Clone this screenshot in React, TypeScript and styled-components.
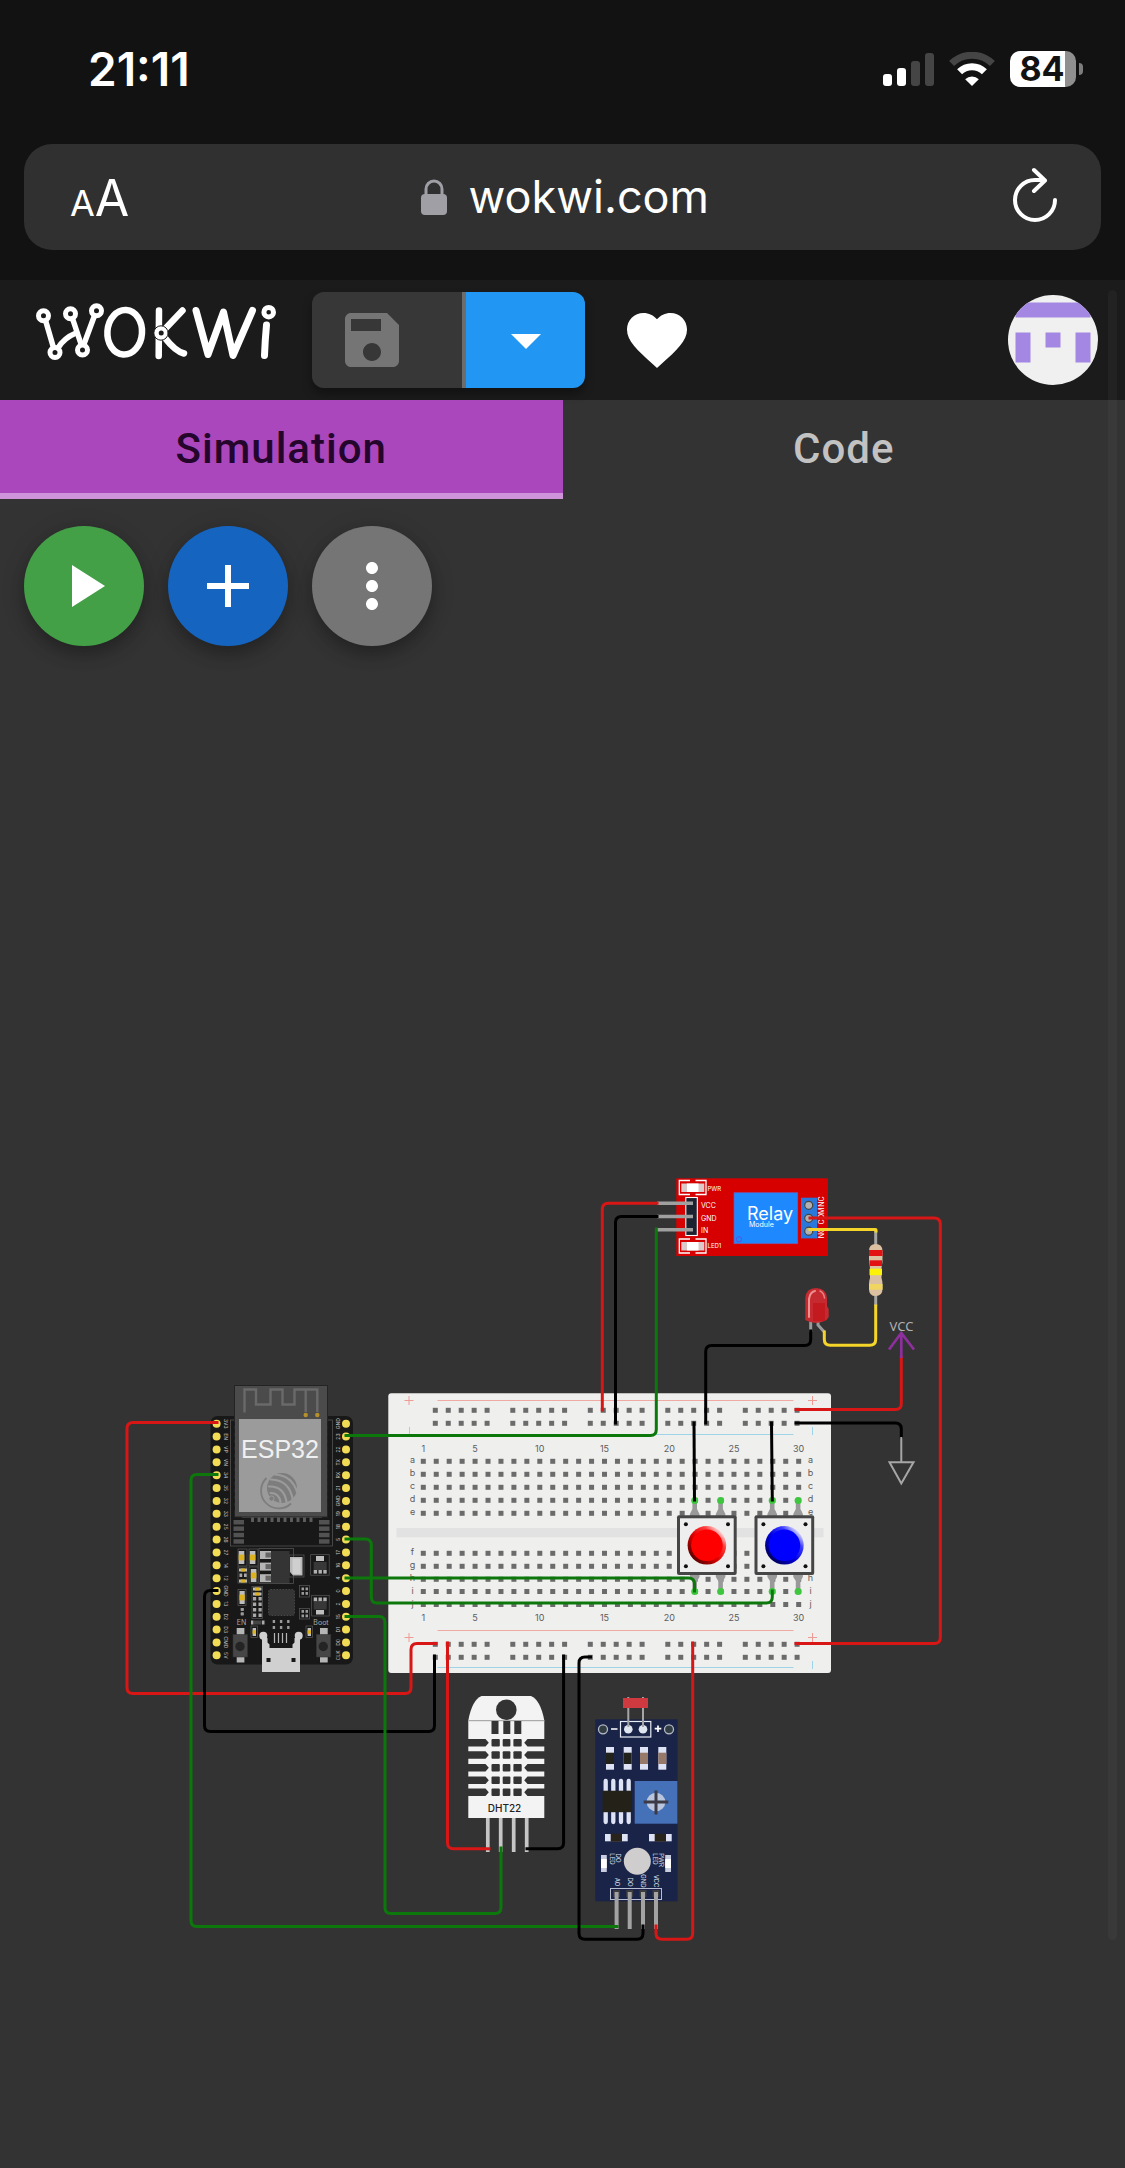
import React from "react";
import styled, { createGlobalStyle } from "styled-components";

const GlobalStyle = createGlobalStyle`
  * { box-sizing: border-box; }
  body {
    margin: 0;
    background: #333333;
    font-family: Inter, "Liberation Sans", sans-serif;
  }
  button, input { font: inherit; color: inherit; border: 0; padding: 0; margin: 0; background: none; }
  button { cursor: pointer; }
  svg { display: block; flex: none; }
`;

const Page = styled.div`
  position: relative;
  min-height: 100vh;
  display: flex;
  flex-direction: column;
  background: #333333;
`;

const BrowserChrome = styled.header`
  background: #121212;
  color: #ffffff;
  padding: 0 24px 30px;
`;

const StatusBar = styled.div`
  height: 144px;
  padding: 0 18px 6px 64px;
  display: flex;
  align-items: center;
  justify-content: space-between;
`;

const Clock = styled.time`
  font-size: 46px;
  font-weight: 600;
  line-height: 48px;
`;

const StatusIcons = styled.div`
  display: flex;
  align-items: center;
  gap: 15px;
`;

const Battery = styled.div`
  display: flex;
  align-items: center;
  gap: 3px;
`;

const BatteryLevel = styled.div`
  width: 66px;
  height: 36px;
  padding-right: 2px;
  border-radius: 10px;
  background: linear-gradient(to right, #ffffff 55px, #8f8f8f 55px);
  color: #121212;
  font-size: 34px;
  font-weight: 700;
  line-height: 36px;
  text-align: center;
`;

const BatteryNub = styled.div`
  width: 4px;
  height: 12px;
  border-radius: 0 6px 6px 0;
  background: #7d7d7d;
`;

const AddressBar = styled.div`
  height: 106px;
  padding: 0 36px 0 46px;
  border-radius: 28px;
  background: #303030;
  display: grid;
  grid-template-columns: 1fr auto 1fr;
  align-items: center;
`;

const TextSizeButton = styled.button`
  justify-self: start;
  display: flex;
  align-items: baseline;
  padding-top: 6px;
  line-height: 60px;
`;

const Glyph = styled.span<{ $size: number }>`
  font-size: ${(p) => p.$size}px;
`;

const Address = styled.label`
  display: flex;
  align-items: center;
  gap: 22px;
`;

const AddressInput = styled.input`
  width: 246px;
  font-size: 45px;
  line-height: 56px;
  outline: none;
`;

const IconButton = styled.button`
  display: flex;
  align-items: center;
  justify-content: center;
`;

const ReloadButton = styled(IconButton)`
  justify-self: end;
`;

const AppBar = styled.nav`
  height: 120px;
  padding: 0 27px 0 36px;
  background: #1b1b1b;
  color: #ffffff;
  display: flex;
  align-items: center;
`;

const LogoLink = styled.a`
  margin-right: 36px;
  padding-bottom: 17px;
`;

const SplitButton = styled.div`
  display: flex;
  height: 96px;
  margin-right: 36px;
  border-radius: 12px;
  overflow: hidden;
  box-shadow: 0 6px 10px rgba(0, 0, 0, 0.35);
`;

const SaveButton = styled(IconButton)`
  width: 154px;
  padding-left: 24px;
  justify-content: flex-start;
  background: #373737;
  color: #757575;
  border-right: 4px solid #6c6c6c;
`;

const SaveMenuButton = styled(IconButton)`
  width: 119px;
  background: #2196f3;
  color: #ffffff;
`;

const AvatarButton = styled.button`
  margin-left: auto;
  width: 90px;
  height: 90px;
  border-radius: 50%;
  overflow: hidden;
`;

const Tabs = styled.div`
  display: grid;
  grid-template-columns: 1fr 1fr;
`;

const Tab = styled.button<{ $active?: boolean }>`
  height: 99px;
  padding-top: 4px;
  border-bottom: 6px solid ${(p) => (p.$active ? "#ce93d8" : "transparent")};
  background: ${(p) => (p.$active ? "#ab47bc" : "transparent")};
  color: ${(p) => (p.$active ? "#24052b" : "#c2c2c2")};
  font-family: Roboto, "Liberation Sans", sans-serif;
  font-size: 42px;
  font-weight: 500;
  letter-spacing: 1px;
`;

const Workspace = styled.main`
  flex: 1;
  display: flex;
  flex-direction: column;
  padding: 27px 0 208px;
`;

const Controls = styled.div`
  display: flex;
  gap: 24px;
  padding: 0 24px;
`;

const Fab = styled(IconButton)<{ $color: string }>`
  width: 120px;
  height: 120px;
  border-radius: 50%;
  background: ${(p) => p.$color};
  color: #ffffff;
  box-shadow: 0 9px 15px rgba(0, 0, 0, 0.2), 0 4px 24px rgba(0, 0, 0, 0.16);
`;

const Diagram = styled.svg`
  width: 100%;
  height: auto;
  margin-top: auto;
`;

const ScrollThumb = styled.div`
  position: absolute;
  top: 290px;
  right: 8px;
  bottom: 228px;
  width: 9px;
  border-radius: 5px;
  background: rgba(255, 255, 255, 0.03);
`;

const MaterialIcon = ({ d }: { d: string }) => (
  <svg width="72" height="72" viewBox="0 0 24 24" fill="currentColor" aria-hidden="true">
    <path d={d} />
  </svg>
);

const icons = {
  save: "M17 3H5c-1.11 0-2 .9-2 2v14c0 1.1.89 2 2 2h14c1.1 0 2-.9 2-2V7l-4-4zm-5 16c-1.66 0-3-1.34-3-3s1.34-3 3-3 3 1.34 3 3-1.34 3-3 3zm3-10H5V5h10v4z",
  drop: "m7 10 5 5 5-5z",
  heart:
    "m12 21.35-1.45-1.32C5.4 15.36 2 12.28 2 8.5 2 5.42 4.42 3 7.5 3c1.74 0 3.41.81 4.5 2.09C13.09 3.81 14.76 3 16.5 3 19.58 3 22 5.42 22 8.5c0 3.78-3.4 6.86-8.55 11.54L12 21.35z",
  play: "M8 5v14l11-7z",
  add: "M19 13h-6v6h-2v-6H5v-2h6V5h2v6h6v2z",
  more: "M12 8c1.1 0 2-.9 2-2s-.9-2-2-2-2 .9-2 2 .9 2 2 2zm0 2c-1.1 0-2 .9-2 2s.9 2 2 2 2-.9 2-2-.9-2-2-2zm0 6c-1.1 0-2 .9-2 2s.9 2 2 2 2-.9 2-2-.9-2-2-2z",
};

const SignalIcon = () => (
  <svg width="51" height="33" viewBox="0 0 51 33" aria-label="Signal" role="img">
    <rect x="0" y="21" width="9" height="12" rx="3" fill="#fff" />
    <rect x="14" y="15" width="9" height="18" rx="3" fill="#fff" />
    <rect x="28" y="8" width="9" height="25" rx="3" fill="#454545" />
    <rect x="42" y="0" width="9" height="33" rx="3" fill="#454545" />
  </svg>
);

const WifiIcon = () => (
  <svg width="46" height="34" viewBox="0 0 46 34" aria-label="Wi-Fi" role="img">
    <path d="M2.6 11.6A29 29 0 0 1 43.4 11.6" fill="none" stroke="#454545" strokeWidth="7" />
    <path d="M10.6 19.8A17.5 17.5 0 0 1 35.4 19.8" fill="none" stroke="#fff" strokeWidth="7" />
    <path d="M23 34 16.2 27.2A9.6 9.6 0 0 1 29.8 27.2Z" fill="#fff" />
  </svg>
);

const LockIcon = () => (
  <svg width="26" height="36" viewBox="0 0 26 36" aria-hidden="true">
    <path d="M5 17V10a8 8 0 0 1 16 0v7" fill="none" stroke="#9f9fa5" strokeWidth="3" />
    <rect x="0" y="15" width="26" height="21" rx="4" fill="#9f9fa5" />
  </svg>
);

const ReloadIcon = () => (
  <svg width="60" height="60" viewBox="0 0 60 60" fill="none" stroke="#fff" strokeWidth="4" strokeLinecap="round" strokeLinejoin="round" aria-hidden="true">
    <path d="M50 33a20 20 0 1 1-20-20h9M29 3l11 10.500L29 24" />
  </svg>
);

const Logo = () => (
  <svg width="240" height="58" viewBox="36 302 240 58" fill="none" stroke="#fff" strokeLinecap="round" strokeLinejoin="round" role="img" aria-label="Wokwi">
    <g strokeWidth="5.500">
      <line x1="46" y1="321" x2="53" y2="345" />
      <path d="M58 347Q64 337 76 332" />
      <line x1="73" y1="319" x2="81" y2="343" />
      <line x1="94" y1="316" x2="84" y2="343" />
    </g>
    <g strokeWidth="5">
      <circle cx="43.500" cy="314.700" r="5" />
      <circle cx="70.500" cy="312.700" r="5" />
      <circle cx="96.500" cy="309.700" r="5" />
      <circle cx="55" cy="351.500" r="5" />
      <circle cx="82.500" cy="349" r="5" />
      <circle cx="268.700" cy="311.200" r="4.800" />
    </g>
    <g strokeWidth="6.500">
      <ellipse cx="124.700" cy="331.300" rx="17.300" ry="22.300" transform="rotate(4 124.700 331.300)" />
      <line x1="159" y1="309.500" x2="158.700" y2="355" />
      <line x1="182.500" y1="309.500" x2="165" y2="328" />
      <path d="M165 337Q175 350 184 352.500" />
      <polyline strokeWidth="7" points="196,309.500 208,353.500 223.500,311 233,354.500 252.500,309.500" />
      <path strokeWidth="7" d="M266.500 324Q265 340 264.500 354.500" />
    </g>
    <circle cx="161" cy="332" r="7.200" stroke="#1b1b1b" strokeWidth="1" fill="#fff" />
    <circle cx="161.200" cy="332" r="2.500" fill="#1b1b1b" stroke="none" />
  </svg>
);

const AvatarPicture = () => (
  <svg width="90" height="90" viewBox="0 0 90 90" aria-hidden="true">
    <rect width="90" height="90" fill="#f0f0f0" />
    <g fill="#a387e2">
      <rect x="7.500" y="7.500" width="75" height="15" />
      <rect x="7.500" y="37.500" width="15" height="30" />
      <rect x="67.500" y="37.500" width="15" height="30" />
      <rect x="37.500" y="37.500" width="15" height="15" />
    </g>
  </svg>
);

/* ---------- circuit ---------- */

type Point = [number, number];

const RED = "#d81616";
const GREEN = "#0c780c";
const BLACK = "#000000";
const GOLD = "#f5d52a";

/* Joins the points with straight runs and rounds every bend. */
function routeWire(points: Point[], radius = 6) {
  let d = `M${points[0][0]} ${points[0][1]}`;
  for (let i = 1; i < points.length - 1; i++) {
    const [px, py] = points[i - 1];
    const [x, y] = points[i];
    const [nx, ny] = points[i + 1];
    const a = Math.hypot(x - px, y - py);
    const b = Math.hypot(nx - x, ny - y);
    d += `L${x - ((x - px) / a) * radius} ${y - ((y - py) / a) * radius}`;
    d += `Q${x} ${y} ${x + ((nx - x) / b) * radius} ${y + ((ny - y) / b) * radius}`;
  }
  const end = points[points.length - 1];
  return `${d}L${end[0]} ${end[1]}`;
}

const wires: { color: string; radius?: number; points: Point[] }[] = [
  { color: RED, points: [[217, 1422.5], [127, 1422.5], [127, 1693.5], [411, 1693.5], [411, 1643.5], [436, 1643.5]] },
  { color: GREEN, points: [[217, 1474.5], [191, 1474.5], [191, 1926.5], [617, 1926.5]] },
  { color: BLACK, points: [[217, 1590.5], [204.5, 1590.5], [204.5, 1731.5], [434.5, 1731.5], [434.5, 1656]] },
  { color: GREEN, points: [[346, 1435.5], [656.3, 1435.5], [656.3, 1229]] },
  { color: GREEN, points: [[346, 1539], [371.3, 1539], [371.3, 1603], [772.3, 1603], [772.3, 1591]] },
  { color: GREEN, points: [[346, 1578], [694.5, 1578], [694.5, 1591]] },
  { color: GREEN, points: [[346, 1616.5], [385, 1616.5], [385, 1913.5], [501, 1913.5], [501, 1848]] },
  { color: RED, points: [[657, 1203.3], [602.3, 1203.3], [602.3, 1410]] },
  { color: BLACK, points: [[657, 1216.5], [615.5, 1216.5], [615.5, 1423]] },
  { color: RED, points: [[810, 1218], [940.3, 1218], [940.3, 1643.5], [796, 1643.5]] },
  { color: GOLD, radius: 0.5, points: [[810, 1229.5], [876, 1229.5], [876, 1231]] },
  { color: GOLD, points: [[824.3, 1332], [824.3, 1345.3], [875.7, 1345.3], [875.7, 1306]] },
  { color: BLACK, points: [[810.7, 1331], [810.7, 1345.5], [705.7, 1345.5], [705.7, 1423]] },
  { color: RED, points: [[901.3, 1357], [901.3, 1409.5], [796, 1409.5]] },
  { color: BLACK, points: [[796, 1423], [901.3, 1423], [901.3, 1437]] },
  { color: BLACK, points: [[694, 1423], [694.5, 1500]] },
  { color: BLACK, points: [[771.5, 1423], [772.3, 1500]] },
  { color: RED, points: [[447.5, 1643], [447.5, 1848.7], [489, 1848.7]] },
  { color: BLACK, points: [[563.6, 1656], [563.6, 1848.7], [527, 1848.7]] },
  { color: BLACK, points: [[590.5, 1657], [579, 1657], [579, 1939.3], [643, 1939.3], [643, 1926]] },
  { color: RED, points: [[692.7, 1643], [692.7, 1939.3], [656, 1939.3], [656, 1926]] },
];

const Wires = () => (
  <g fill="none" strokeWidth="3" strokeLinecap="square">
    {wires.map((w, i) => (
      <path key={i} d={routeWire(w.points, w.radius)} stroke={w.color} />
    ))}
  </g>
);

const leftPins = ["3V3", "EN", "VP", "VN", "34", "35", "32", "33", "25", "26", "27", "14", "12", "GND", "13", "D2", "D3", "CMD", "5V"];
const rightPins = ["GND", "23", "22", "TX", "RX", "21", "GND", "19", "18", "5", "17", "16", "4", "0", "2", "15", "D1", "D0", "CLK"];
const pinY = (i: number) => 1423.7 + i * 12.87;
const times = (n: number) => Array.from({ length: n }, (_, i) => i);

/* A ceramic capacitor: grey caps at the ends, amber body between. */
const Capacitor = ({ x, y, w, h }: { x: number; y: number; w: number; h: number }) => {
  const upright = h > w;
  return (
    <g>
      <rect x={x} y={y} width={w} height={h} fill="#bdbdbd" />
      {upright ? (
        <rect x={x} y={y + h * 0.28} width={w} height={h * 0.44} fill="#dcb21e" />
      ) : (
        <rect x={x + w * 0.22} y={y} width={w * 0.56} height={h} fill="#dcb21e" />
      )}
    </g>
  );
};

const EspBoard = () => (
  <g>
    <rect x="210.500" y="1416" width="142.500" height="248.500" rx="7" fill="#181818" />
    {times(19).map((i) => (
      <g key={i}>
        <circle cx="216.600" cy={pinY(i)} r="4" fill="#f3dc55" />
        <circle cx="346" cy={pinY(i)} r="4" fill="#f3dc55" />
        <text fontSize="5" fill="#c9c9c9" textAnchor="middle" transform={`translate(224 ${pinY(i)}) rotate(90)`}>{leftPins[i]}</text>
        <text fontSize="5" fill="#c9c9c9" textAnchor="middle" transform={`translate(339.500 ${pinY(i)}) rotate(-90)`}>{rightPins[i]}</text>
      </g>
    ))}
    <rect x="230.500" y="1420" width="102" height="126" fill="none" stroke="#5a5a5a" strokeWidth="0.700" />
    <rect x="234.500" y="1385.500" width="93" height="131.500" fill="#4b4b4b" stroke="#242424" />
    <g stroke="#181818" strokeWidth="1.600" strokeDasharray="4 3">
      <line x1="234" y1="1422" x2="234" y2="1512" />
      <line x1="328.500" y1="1422" x2="328.500" y2="1512" />
    </g>
    <path d="M244.500 1412.500V1389.500H256V1404.500H270.500V1389.500H282.500V1404.500H294.500V1389.500H317.300V1412M305.700 1389.500V1412" fill="none" stroke="#6a6a6a" strokeWidth="2.400" />
    <circle cx="305.700" cy="1415" r="2.200" fill="#b4912c" />
    <circle cx="317.300" cy="1415" r="2.200" fill="#b4912c" />
    <rect x="239" y="1419" width="82" height="93" fill="#9b9b9b" />
    <text x="280" y="1457.500" fontSize="25" fontFamily="Liberation Sans, sans-serif" fill="#f0f0f0" textAnchor="middle">ESP32</text>
    <g>
      <circle cx="282" cy="1488" r="15" fill="#7d7d7d" />
      <path d="M266.500 1478A17 17 0 1 0 291 1503.500" fill="none" stroke="#7d7d7d" strokeWidth="1.800" />
      <g fill="none" stroke="#9b9b9b" strokeWidth="2.200" strokeLinecap="round">
        <path d="M271 1479.500Q290 1480 293 1501" />
        <path d="M269 1486.500Q284 1486 286.500 1502" />
        <path d="M270.500 1493Q279 1493 280.500 1502" />
        <path d="M275 1474.500Q292 1475.500 297 1492" />
      </g>
      <circle cx="271.500" cy="1498.500" r="2.600" fill="#7d7d7d" stroke="#9b9b9b" />
    </g>
    <rect x="242" y="1517" width="80" height="1" fill="#3a3a3a" />
    {times(10).map((i) => (
      <rect key={i} x={251 + i * 6.5} y="1517.500" width="3" height="4.500" fill="#5b5b5b" />
    ))}
    {times(4).map((i) => (
      <g key={i} fill="#525252">
        <rect x="233.500" y={1520 + i * 6.4} width="10.500" height="4.500" />
        <rect x="319" y={1520 + i * 6.4} width="10.500" height="4.500" />
      </g>
    ))}
    <g fill="none" stroke="#5a5a5a" strokeWidth="0.700">
      <rect x="238" y="1549" width="9" height="17" />
      <rect x="249" y="1549" width="9" height="17" />
      <rect x="238" y="1567" width="9" height="16" />
      <rect x="249" y="1567" width="9" height="16" />
      <rect x="259" y="1548.500" width="34.500" height="35" />
      <rect x="289" y="1555" width="15" height="22" />
      <rect x="310.700" y="1554.700" width="18.500" height="20.500" />
      <rect x="311.700" y="1595.300" width="17.500" height="20.700" />
      <rect x="299.500" y="1585.500" width="10" height="11.500" />
      <rect x="299.500" y="1608.500" width="10" height="10.500" />
      <rect x="238" y="1589.500" width="8" height="16" />
      <rect x="252" y="1586.500" width="10.500" height="32" />
      <rect x="251" y="1626" width="6.500" height="11.500" />
      <rect x="306" y="1626" width="6.500" height="11.500" />
    </g>
    <Capacitor x={238.7} y={1551} w={5.6} h={13} />
    <Capacitor x={249.8} y={1551} w={5.6} h={13} />
    <Capacitor x={239} y={1568.5} w={8} h={3} />
    <rect x="239.500" y="1573.500" width="2.700" height="3.500" fill="#aaa" />
    <rect x="244" y="1573.500" width="2.700" height="3.500" fill="#aaa" />
    <Capacitor x={239} y={1579.5} w={8} h={3} />
    <Capacitor x={250.8} y={1569} w={5.6} h={13} />
    <Capacitor x={239.5} y={1591} w={5.2} h={13} />
    <Capacitor x={253} y={1587.5} w={8.5} h={3} />
    <Capacitor x={253} y={1592.5} w={8.5} h={3} />
    {times(4).map((i) => (
      <g key={i} fill="#a8a8a8">
        <rect x="253" y={1597 + i * 5.5} width="3.200" height="3.500" />
        <rect x="258.500" y={1597 + i * 5.5} width="3.200" height="3.500" />
      </g>
    ))}
    <rect x="271" y="1551" width="18.500" height="32" fill="#343434" />
    {times(3).map((i) => (
      <g key={i}>
        <rect x="260" y={1551 + i * 11.6} width="11" height="8" fill="#b5b5b5" />
        <rect x="265.500" y={1552.5 + i * 11.6} width="5.500" height="5" fill="#666" />
      </g>
    ))}
    <path d="M290 1557H302.500V1575.500H293L290 1572Z" fill="#b9b9b9" />
    <rect x="292.500" y="1558.500" width="8" height="15.500" fill="#cfcfcf" />
    <rect x="313.700" y="1562" width="13" height="8" fill="#383838" />
    <rect x="316" y="1556" width="8" height="5" fill="#bdbdbd" />
    <rect x="313.700" y="1600.500" width="13" height="9" fill="#383838" />
    <rect x="316" y="1610" width="8" height="4.500" fill="#bdbdbd" />
    {times(3).map((i) => (
      <g key={i} fill="#b0b0b0">
        <rect x={313.7 + i * 4.8} y="1570" width="3.400" height="3.600" />
        <rect x={313.7 + i * 4.8} y="1597.500" width="3.400" height="3.600" />
        <rect x={272.7 + i * 7.2} y="1620" width="2.400" height="3" fill="#9a9a9a" />
        <rect x={272.7 + i * 7.2} y="1626" width="2.400" height="3" fill="#9a9a9a" />
      </g>
    ))}
    {times(2).map((i) =>
      times(2).map((j) => (
        <g key={`${i}${j}`} fill="#999">
          <rect x={301.5 + i * 4} y={1587.5 + j * 4.5} width="2.500" height="2.800" />
          <rect x={301.5 + i * 4} y={1610 + j * 4.5} width="2.500" height="2.800" />
          <rect x={240.8} y={1608 + j * 4.5} width="2.800" height="2.800" />
        </g>
      ))
    )}
    <rect x="268.500" y="1589.500" width="26" height="26" rx="2" fill="#353535" stroke="#474747" strokeDasharray="1.500 1.500" />
    <g fontSize="7" fill="#a8a8a8" textAnchor="middle">
      <text x="241.500" y="1624.500">EN</text>
      <text x="321" y="1624.500">Boot</text>
    </g>
    <rect x="251" y="1620.500" width="2.500" height="4" fill="#aaa" />
    <rect x="253.500" y="1620.500" width="8" height="4" fill="#444" />
    <rect x="262" y="1620.500" width="2.500" height="4" fill="#aaa" />
    <Capacitor x={252.6} y={1628} w={3.4} h={8} />
    <Capacitor x={307.6} y={1628} w={3.4} h={8} />
    {[233, 316.3].map((x) => (
      <g key={x}>
        <rect x={x + 3.7} y="1628" width="7.700" height="34.500" fill="#b5b5b5" />
        <rect x={x} y="1634.500" width="14.500" height="22.500" fill="#464646" stroke="#333" strokeWidth="0.600" />
        <circle cx={x + 7} cy="1646.500" r="4.700" fill="#242424" />
      </g>
    ))}
    <circle cx="263.300" cy="1635.700" r="4" fill="#d0d0d0" />
    <circle cx="298.700" cy="1635.700" r="4" fill="#d0d0d0" />
    <path d="M262 1638H267.500V1642.500L269.500 1644.500V1648H292.500V1644.500L294.500 1642.500V1638H300V1672H262Z" fill="#d0d0d0" />
    <path d="M274.500 1633V1643M278.500 1633V1643M282.500 1633V1643M286.500 1633V1643" stroke="#b5b5b5" strokeWidth="1.200" />
    <rect x="266.500" y="1658" width="4" height="4" fill="#181818" />
    <rect x="291.500" y="1658" width="4" height="4" fill="#181818" />
  </g>
);

const rowLabels = ["a", "b", "c", "d", "e", "f", "g", "h", "i", "j"];
const rowY = [1461.3, 1474.3, 1487.3, 1500.3, 1513.3, 1553.3, 1566.3, 1579.3, 1591.5, 1604.5];
const columnX = (n: number) => 423.3 + (n - 1) * 12.944;
const railY = [1410.3, 1423.3, 1644.3, 1657.3];

const Breadboard = () => (
  <g>
    <rect x="388.300" y="1393.300" width="442.700" height="279.700" rx="3" fill="#efefee" />
    <rect x="396.500" y="1528" width="427" height="9.300" fill="#e2e2e2" />
    <g stroke="#f0aaa4">
      <line x1="437.500" y1="1400.500" x2="793.500" y2="1400.500" />
      <line x1="437.500" y1="1630.500" x2="793.500" y2="1630.500" />
    </g>
    <g stroke="#9fd4e8">
      <line x1="437.500" y1="1434.500" x2="793.500" y2="1434.500" />
      <line x1="437.500" y1="1667.500" x2="793.500" y2="1667.500" />
      <path d="M409.500 1427V1435M812.500 1427V1435M812.500 1661V1669" />
    </g>
    <path
      d="M404.500 1400.500H413.500M409 1396V1405M808 1400.500H817M812.500 1396V1405M404.500 1637.500H413.500M409 1633V1642M808 1637.500H817M812.500 1633V1642"
      stroke="#ef9a94"
      fill="none"
    />
    <g fill="#6b6b6b">
      {railY.map((y) =>
        times(25).map((i) => (
          <rect key={`${y}-${i}`} x={432.8 + Math.floor(i / 5) * 77.5 + (i % 5) * 12.95} y={y - 2.5} width="5" height="5" />
        ))
      )}
      {rowY.map((y) =>
        times(30).map((i) => <rect key={`${y}-${i}`} x={columnX(i + 1) - 2.5} y={y - 2.5} width="5" height="5" />)
      )}
    </g>
    <g fontSize="9" fill="#5c5c5c" textAnchor="middle">
      {[1, 5, 10, 15, 20, 25, 30].map((n) => (
        <g key={n}>
          <text x={columnX(n)} y="1452">{n}</text>
          <text x={columnX(n)} y="1621">{n}</text>
        </g>
      ))}
      {rowLabels.map((label, i) => (
        <g key={label}>
          <text x="412.500" y={rowY[i] + 2}>{label}</text>
          <text x="810.500" y={rowY[i] + 2}>{label}</text>
        </g>
      ))}
    </g>
  </g>
);

const PushButton = ({ x, color }: { x: number; color: "red" | "blue" }) => (
  <g>
    {[694.7, 720.6].map((legX) => (
      <g key={legX} transform={`translate(${x - 677} 0)`}>
        <path d={`M${legX - 2.3} 1500h4.600v9l2.500 5v3h-9.600v-3l2.500 -5z`} fill="#999" />
        <path d={`M${legX - 2.3} 1592h4.600v-11l2.500 -4v-3h-9.600v3l2.500 4z`} fill="#999" />
        <circle cx={legX} cy="1500.500" r="3.500" fill="#3fc63f" />
        <circle cx={legX} cy="1591.500" r="3.500" fill="#3fc63f" />
      </g>
    ))}
    <rect x={x} y="1515.300" width="59.700" height="59.700" rx="2" fill="#464646" />
    <rect x={x + 3} y="1518.300" width="53.700" height="53.700" fill="#eeeeee" />
    {[8.9, 51].map((dx) => [1524.3, 1566.3].map((y) => <circle key={`${dx}-${y}`} cx={x + dx} cy={y} r="2" fill="#111" />))}
    <circle cx={x + 29.9} cy="1545.300" r="19.300" fill={`url(#${color}Rim)`} />
    <circle cx={x + 29.9} cy="1545.300" r="15.800" fill={color} />
  </g>
);

const LedPackage = ({ y }: { y: number }) => (
  <g>
    <path
      d={`M690 ${y}H679.300V${y + 14}H690M695.500 ${y}H706V${y + 14}H695.500`}
      fill="none"
      stroke="#ffffff"
      strokeWidth="1.300"
    />
    <rect x="681.300" y={y + 3} width="23" height="8.500" fill="#dccaca" />
    <rect x="687" y={y + 3} width="11.500" height="8.500" fill="#fff" />
  </g>
);

const Relay = () => (
  <g>
    <rect x="676.300" y="1178.300" width="151.700" height="77.700" fill="#d60000" />
    <LedPackage y={1180.5} />
    <LedPackage y={1239} />
    <rect x="685.800" y="1197.500" width="11.500" height="38" fill="#1d2230" stroke="#fff" strokeWidth="1.100" />
    <path d="M657 1203.300H693M657 1216.500H693M657 1229.700H693" stroke="#a0a0a0" strokeWidth="3.400" />
    <g fontSize="7" fill="#fff">
      <text x="701" y="1207.500">VCC</text>
      <text x="701" y="1220.500">GND</text>
      <text x="701" y="1232.500">IN</text>
      <text x="707.500" y="1191" fontSize="6">PWR</text>
      <text x="707.500" y="1248" fontSize="6">LED1</text>
    </g>
    <rect x="734" y="1192.700" width="63.700" height="51" fill="#1e88ff" stroke="#7a58a8" strokeWidth="0.700" />
    <circle cx="739" cy="1239.300" r="2.600" fill="none" stroke="#5656d8" />
    <text x="747" y="1220.300" fontSize="18" fill="#fff">Relay</text>
    <text x="749" y="1227.300" fontSize="7" fill="#fff">Module</text>
    <rect x="801" y="1197.700" width="16" height="40.700" fill="#2a78dc" />
    {[1205.3, 1218.3, 1231.2].map((y) => (
      <circle key={y} cx="808.700" cy={y} r="4" fill="#b0b0b0" stroke="#444" strokeWidth="1.200" />
    ))}
    <g fontSize="7" fill="#fff" textAnchor="middle">
      <text transform="translate(824 1233) rotate(-90)">NO</text>
      <text transform="translate(824 1216) rotate(-90)">COM</text>
      <text transform="translate(824 1201.500) rotate(-90)">NC</text>
    </g>
  </g>
);

const Resistor = () => (
  <g>
    <line x1="875.700" y1="1231" x2="875.700" y2="1306" stroke="#a5a5a5" strokeWidth="3" />
    <path
      d="M869 1251Q869 1244 875.700 1244T882.500 1251V1262Q882 1265 881.500 1268V1278Q882.500 1281 882.500 1284V1289Q882.500 1296 875.700 1296T869 1289V1284Q869 1281 870 1278V1268Q869.500 1265 869 1262Z"
      fill="#dcc0a2"
    />
    <rect x="869" y="1250" width="13.500" height="6" fill="#e31212" />
    <rect x="869.500" y="1260.300" width="12.500" height="5.700" fill="#e31212" />
    <rect x="869.500" y="1268.700" width="12.500" height="6.500" fill="#fbf208" />
    <rect x="869" y="1284" width="13.500" height="5.700" fill="#f0d560" />
  </g>
);

const Led = () => (
  <g>
    <path d="M810.700 1321V1332" stroke="#9a9a9a" strokeWidth="3" />
    <path d="M818 1321V1325L824.300 1332" fill="none" stroke="#9a9a9a" strokeWidth="3" />
    <path d="M805.300 1320V1298Q806 1288 816 1288T827 1298V1306L828.700 1309V1317L826.500 1320Q816 1326 805.300 1320Z" fill="#c42a30" />
    <rect x="813" y="1303" width="12" height="18" fill="#c21a1f" />
    <path d="M809 1317V1299Q810 1292 815 1291" fill="none" stroke="#ee9090" strokeWidth="2" strokeLinecap="round" />
    <path d="M820 1291Q824 1293 824.500 1298" fill="none" stroke="#e88080" strokeWidth="1.500" strokeLinecap="round" />
  </g>
);

const PowerSymbols = () => (
  <g fill="none">
    <path d="M889 1349.500 901.300 1333 914 1349.500M901.300 1333V1358" stroke="#8d309d" strokeWidth="2.700" />
    <text x="901.500" y="1330.700" fontSize="13" fontFamily="Noto Sans, sans-serif" fill="#b0b0b0" textAnchor="middle">VCC</text>
    <path d="M901.300 1437V1462M889.500 1462.300H913.500L901.300 1483.500Z" stroke="#a6a6a6" strokeWidth="2" />
  </g>
);

const slotRows = [1739, 1751.2, 1764, 1776.5, 1788.5];

const Dht = () => (
  <g>
    <path d="M487.800 1818V1852M500.700 1818V1852M513.700 1818V1852M526.700 1818V1852" stroke="#c6c6c6" strokeWidth="3.700" />
    <path d="M468.300 1818V1720.500Q472 1700 481.500 1696H531Q540.500 1700 544.300 1720.500V1818Z" fill="#f3f3f3" />
    <line x1="468.300" y1="1720.700" x2="544.300" y2="1720.700" stroke="#999" />
    <g fill="#333333">
      <circle cx="506.300" cy="1709.700" r="10.300" />
      {[491.5, 503.3, 514.3].map((x) => (
        <rect key={x} x={x} y="1721" width="7" height="13" />
      ))}
      {slotRows.map((y) => (
        <g key={y}>
          <path d={`M468 ${y}H485.500L488.800 ${y + 3.7}L485.500 ${y + 7.5}H468Z`} />
          <path d={`M545 ${y}H527.500L524.200 ${y + 3.7}L527.500 ${y + 7.5}H545Z`} />
          <rect x="491.500" y={y} width="8.300" height="7.500" rx="1" />
          <rect x="502.700" y={y} width="7.700" height="7.500" rx="1" />
          <rect x="513.400" y={y} width="8.300" height="7.500" rx="1" />
        </g>
      ))}
    </g>
    <text x="504.500" y="1812" fontSize="10" fontWeight="500" fill="#222" textAnchor="middle">DHT22</text>
  </g>
);

const PAD = "#dde3f5";

const LightSensor = () => (
  <g>
    <rect x="595.300" y="1719.300" width="82.300" height="182" fill="#1a2348" />
    <rect x="620.500" y="1721.500" width="30.300" height="15.500" fill="none" stroke="#e6ebf5" strokeWidth="1.200" />
    <circle cx="628.300" cy="1729.300" r="4.300" fill="#dfe6f0" />
    <circle cx="643" cy="1729.300" r="4.300" fill="#dfe6f0" />
    <path d="M628.300 1697V1727M643 1697V1727" stroke="#a5a5a5" strokeWidth="2" />
    <rect x="623" y="1698" width="25" height="10" fill="#cf3a40" />
    <circle cx="603" cy="1729.300" r="4.500" fill="#313d42" stroke="#b4b9c4" strokeWidth="1.300" />
    <circle cx="669" cy="1729.300" r="4.500" fill="#313d42" stroke="#b4b9c4" strokeWidth="1.300" />
    <path d="M611 1729H617.500M654.700 1728.700H661.300M658 1725.400V1732" stroke="#fff" strokeWidth="1.700" />
    {[606, 623.7, 640, 658.3].map((x, i) => (
      <g key={x}>
        <rect x={x} y="1747" width="8" height="22.700" fill={PAD} />
        <rect x={x} y="1752.700" width="8" height="11.300" fill={i < 2 ? "#22221c" : "#97796a"} />
      </g>
    ))}
    <path d="M605.700 1781V1822M613.300 1781V1822M621 1781V1822M628.700 1781V1822" stroke={PAD} strokeWidth="4.300" strokeLinecap="round" />
    <rect x="602.500" y="1790.700" width="29.500" height="21.500" fill="#242218" />
    <rect x="634.700" y="1781" width="42.700" height="42.700" fill="#4571b8" />
    <circle cx="656" cy="1802" r="9.300" fill="#b9c5dc" />
    <path d="M656 1790.500V1814.500M643.700 1802H668.300" stroke="#3b3b46" strokeWidth="3" />
    {[605, 649].map((x) => (
      <g key={x}>
        <rect x={x} y="1834" width="22.700" height="7.300" fill={PAD} />
        <rect x={x + 5.7} y="1833.700" width="11.300" height="8" fill="#28241c" />
      </g>
    ))}
    {[601, 665.2].map((x) => (
      <g key={x}>
        <rect x={x} y="1855" width="5.800" height="17" fill="#c8cde0" />
        <rect x={x} y="1859" width="5.800" height="9" fill="#fff" />
      </g>
    ))}
    <circle cx="637.300" cy="1861.300" r="13.500" fill="#cfcdcd" />
    <g fontSize="6" fill="#dfe3ee" textAnchor="middle">
      <text transform="translate(616 1858) rotate(90)">DO</text>
      <text transform="translate(609.500 1859) rotate(90)">LED</text>
      <text transform="translate(659 1860) rotate(90)">PWR</text>
      <text transform="translate(652.500 1859) rotate(90)">LED</text>
      <text transform="translate(615 1882) rotate(90)">AO</text>
      <text transform="translate(628 1882) rotate(90)">DO</text>
      <text transform="translate(641 1881) rotate(90)">GND</text>
      <text transform="translate(654 1881) rotate(90)">VCC</text>
    </g>
    <rect x="610.500" y="1888.500" width="51" height="11" fill="none" stroke="#b8bed0" strokeWidth="1" />
    {[616.6, 629.7, 643, 656].map((x) => (
      <g key={x}>
        <rect x={x - 3.5} y="1890" width="7" height="7" fill="#3c3c3c" />
        <rect x={x - 2} y="1892" width="4" height="37" fill="#a3a3a3" />
      </g>
    ))}
  </g>
);

const Circuit = () => (
  <Diagram viewBox="0 1160 1125 800" fontFamily="Inter, sans-serif" role="img" aria-label="ESP32 circuit">
    <defs>
      <linearGradient id="redRim" x1="0.900" y1="0.100" x2="0.100" y2="0.900">
        <stop offset="0" stopColor="#ffffff" />
        <stop offset="0.250" stopColor="#ff3a3a" />
        <stop offset="0.550" stopColor="#e00000" />
        <stop offset="1" stopColor="#4a0000" />
      </linearGradient>
      <linearGradient id="blueRim" x1="0.900" y1="0.100" x2="0.100" y2="0.900">
        <stop offset="0" stopColor="#ffffff" />
        <stop offset="0.250" stopColor="#3a3aff" />
        <stop offset="0.550" stopColor="#0000e0" />
        <stop offset="1" stopColor="#00004a" />
      </linearGradient>
    </defs>
    <EspBoard />
    <Breadboard />
    <PushButton x={677} color="red" />
    <PushButton x={754.5} color="blue" />
    <Relay />
    <Resistor />
    <Led />
    <Dht />
    <LightSensor />
    <Wires />
    <PowerSymbols />
  </Diagram>
);

export default function App() {
  return (
    <Page>
      <GlobalStyle />
      <BrowserChrome>
        <StatusBar>
          <Clock>21:11</Clock>
          <StatusIcons>
            <SignalIcon />
            <WifiIcon />
            <Battery>
              <BatteryLevel>84</BatteryLevel>
              <BatteryNub />
            </Battery>
          </StatusIcons>
        </StatusBar>
        <AddressBar>
          <TextSizeButton aria-label="Page settings">
            <Glyph $size={36}>A</Glyph>
            <Glyph $size={50}>A</Glyph>
          </TextSizeButton>
          <Address>
            <LockIcon />
            <AddressInput type="text" aria-label="Address" defaultValue="wokwi.com" />
          </Address>
          <ReloadButton aria-label="Reload">
            <ReloadIcon />
          </ReloadButton>
        </AddressBar>
      </BrowserChrome>
      <AppBar>
        <LogoLink href="#" aria-label="Wokwi home">
          <Logo />
        </LogoLink>
        <SplitButton>
          <SaveButton aria-label="Save">
            <MaterialIcon d={icons.save} />
          </SaveButton>
          <SaveMenuButton aria-label="Save options">
            <MaterialIcon d={icons.drop} />
          </SaveMenuButton>
        </SplitButton>
        <IconButton aria-label="Like">
          <MaterialIcon d={icons.heart} />
        </IconButton>
        <AvatarButton aria-label="Account">
          <AvatarPicture />
        </AvatarButton>
      </AppBar>
      <Tabs role="tablist">
        <Tab role="tab" aria-selected="true" $active>Simulation</Tab>
        <Tab role="tab" aria-selected="false">Code</Tab>
      </Tabs>
      <Workspace>
        <Controls>
          <Fab $color="#43a047" aria-label="Start simulation">
            <MaterialIcon d={icons.play} />
          </Fab>
          <Fab $color="#1565c0" aria-label="Add part">
            <MaterialIcon d={icons.add} />
          </Fab>
          <Fab $color="#757575" aria-label="More">
            <MaterialIcon d={icons.more} />
          </Fab>
        </Controls>
        <Circuit />
      </Workspace>
      <ScrollThumb />
    </Page>
  );
}
